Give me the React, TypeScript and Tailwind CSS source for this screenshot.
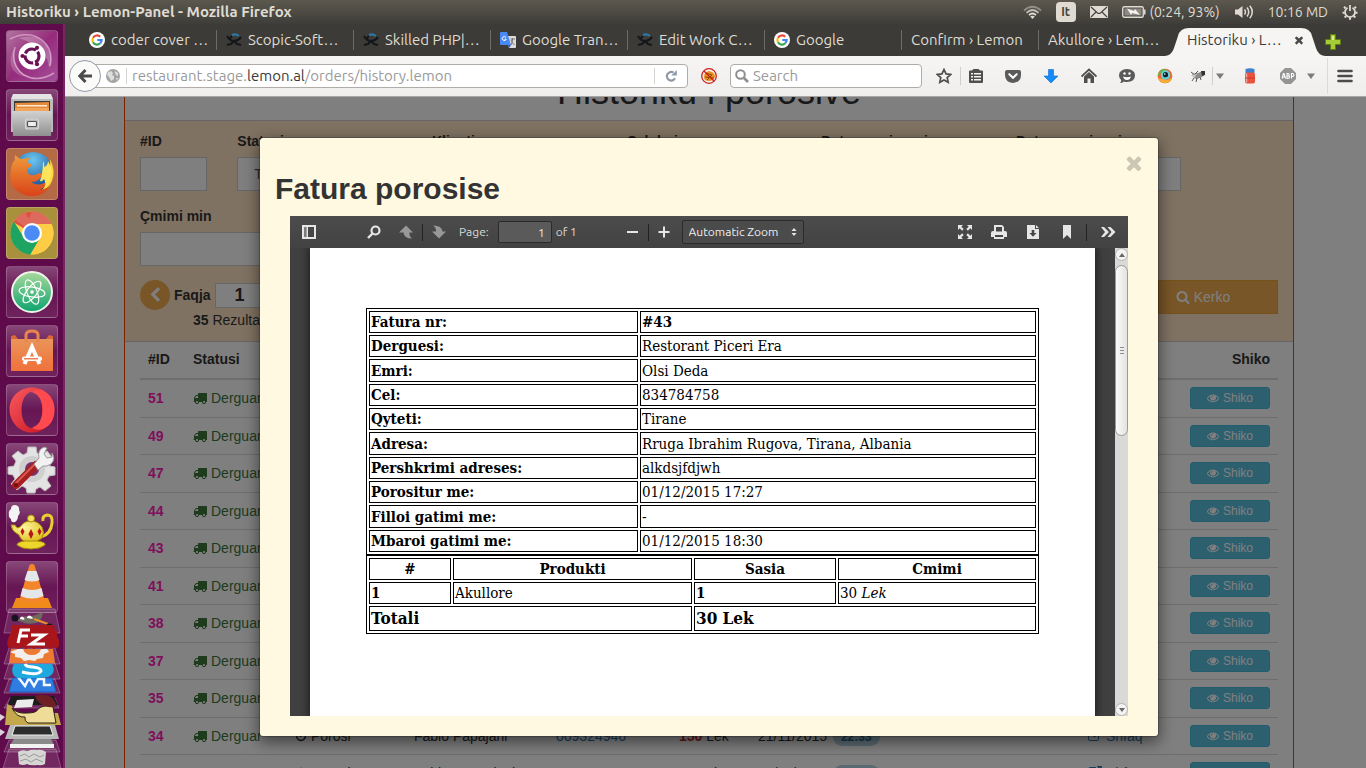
import React from "react";
import type { ReactNode } from "react";

/* ---------- Shared glyphs (1792-unit grid) ---------- */

const GLYPHS = {
  search:
    "M1216 832q0-185-131.5-316.5t-316.5-131.5-316.5 131.5-131.5 316.5 131.5 316.5 316.5 131.5 316.5-131.5 131.5-316.5zm512 832q0 52-38 90t-90 38q-54 0-90-38l-343-342q-179 124-399 124-143 0-273.5-55.5t-225-150-150-225-55.5-273.5 55.5-273.5 150-225 225-150 273.5-55.5 273.5 55.5 225 150 150 225 55.5 273.5q0 220-124 399l343 343q37 37 37 90z",
  eye: "M1664 960q-152-236-381-353 61 104 61 225 0 185-131.5 316.5t-316.5 131.5-316.5-131.5-131.5-316.5q0-121 61-225-229 117-381 353 133 205 333.5 326.5t434.5 121.5 434.5-121.5 333.5-326.5zm-720-384q0-20-14-34t-34-14q-125 0-214.5 89.5t-89.5 214.5q0 20 14 34t34 14 34-14 14-34q0-86 61-147t147-61q20 0 34-14t14-34zm848 384q0 34-20 69-140 230-376.5 368.5t-499.5 138.5-499.5-139-376.5-368q-20-35-20-69t20-69q140-229 376.5-368t499.5-139 499.5 139 376.5 368q20 35 20 69z",
  truck:
    "M640 1408q0-52-38-90t-90-38-90 38-38 90 38 90 90 38 90-38 38-90zm-384-512h384v-256h-158q-13 0-22 9l-195 195q-9 9-9 22v30zm1280 512q0-52-38-90t-90-38-90 38-38 90 38 90 90 38 90-38 38-90zm256-1088v1024q0 15-4 26.5t-13.5 18.5-16.5 11.5-23.5 6-22.5 2-25.5 0-22.5-.5q0 106-75 181t-181 75-181-75-75-181h-384q0 106-75 181t-181 75-181-75-75-181h-64q-3 0-22.5.5t-25.5 0-22.5-2-23.5-6-16.5-11.5-13.5-18.5-4-26.5q0-26 19-45t45-19v-320q0-8-.5-35t0-38 2.5-34.5 6.5-37 14-30.5 22.5-30l198-198q19-19 50.5-32t58.5-13h160v-192q0-26 19-45t45-19h1024q26 0 45 19t19 45z",
  chevronLeft:
    "M1427 301l-531 531 531 531q19 19 19 45t-19 45l-166 166q-19 19-45 19t-45-19l-742-742q-19-19-19-45t19-45l742-742q19-19 45-19t45 19l166 166q19 19 19 45t-19 45z",
  times:
    "M1490 1322q0 40-28 68l-136 136q-28 28-68 28t-68-28l-294-294-294 294q-28 28-68 28t-68-28l-136-136q-28-28-28-68t28-68l294-294-294-294q-28-28-28-68t28-68l136-136q28-28 68-28t68 28l294 294 294-294q28-28 68-28t68 28l136 136q28 28 28 68t-28 68l-294 294 294 294q28 28 28 68z",
  clock:
    "M1024 544v448q0 14-9 23t-23 9h-320q-14 0-23-9t-9-23v-64q0-14 9-23t23-9h224v-352q0-14 9-23t23-9h64q14 0 23 9t9 23zm416 352q0-148-73-273t-198-198-273-73-273 73-198 198-73 273 73 273 198 198 273 73 273-73 198-198 73-273zm224 0q0 209-103 385.5t-279.5 279.5-385.5 103-385.5-103-279.5-279.5-103-385.5 103-385.5 279.5-279.5 385.5-103 385.5 103 279.5 279.5 103 385.5z",
  external:
    "M1408 928v320q0 119-84.500 203.500t-203.500 84.500h-832q-119 0-203.500-84.500t-84.500-203.500v-832q0-119 84.500-203.500t203.500-84.500h704q14 0 23 9t9 23v64q0 14-9 23t-23 9h-704q-66 0-113 47t-47 113v832q0 66 47 113t113 47h832q66 0 113-47t47-113v-320q0-14 9-23t23-9h64q14 0 23 9t9 23zm384-864v512q0 26-19 45t-45 19-45-19l-176-176-652 652q-10 10-23 10t-23-10l-114-114q-10-10-10-23t10-23l652-652-176-176q-19-19-19-45t19-45 45-19h512q26 0 45 19t19 45z",
};

function Glyph({ name, className }: { name: keyof typeof GLYPHS; className?: string }) {
  return (
    <svg viewBox="0 0 1792 1792" className={className} fill="currentColor" aria-hidden="true">
      <path d={GLYPHS[name]} />
    </svg>
  );
}

/* ---------- System bar ---------- */

function SystemBar() {
  return (
    <header className="flex h-6 shrink-0 items-center justify-between bg-gradient-to-b from-[#5c584e] to-[#3e3d39] pr-2 pl-1.5 text-[#dfdbd2]">
      <h1 className="text-[15px] font-bold">Historiku › Lemon-Panel - Mozilla Firefox</h1>
      <div className="flex items-center gap-[14px] text-sm">
        <svg className="h-4 w-[19px]" viewBox="0 0 19 16" fill="none" stroke="#dfdbd2" strokeWidth="1.8" aria-hidden="true">
          <path d="M1 6.500Q9.500-1 18 6.500" opacity=".45" />
          <path d="M3.500 8.800Q9.500 3.200 15.500 8.800" opacity=".8" />
          <path d="M6 11.200Q9.500 7.800 13 11.200" />
          <path d="M9.500 15l-2.300-2.500q2.300-1.700 4.600 0z" fill="#dfdbd2" stroke="none" />
        </svg>
        <span className="flex h-5 w-5 items-center justify-center rounded-sm bg-[#dfdbd2] text-xs font-semibold text-[#45433e]">It</span>
        <svg className="h-3 w-[18px]" viewBox="0 0 18 12" aria-hidden="true">
          <rect width="18" height="12" rx="1" fill="#dfdbd2" />
          <path d="M1 1l6.500 6q1.500 1 3 0L17 1M1 11l5-5M17 11l-5-5" fill="none" stroke="#45433e" strokeWidth="1.200" />
        </svg>
        <span className="flex items-center gap-1">
          <svg className="h-3 w-6" viewBox="0 0 24 12" aria-hidden="true">
            <rect x=".75" y=".75" width="20.500" height="10.500" rx="1.500" fill="none" stroke="#dfdbd2" strokeWidth="1.400" />
            <rect x="2.500" y="2.500" width="17" height="7" fill="#8d8a83" />
            <path d="M22 3.500h1.500v5H22z" fill="#dfdbd2" />
            <path d="M5 2.500l7 2.500 1-2 5 6-8-2-1 2z" fill="#f4f2ed" />
          </svg>
          (0:24, 93%)
        </span>
        <svg className="h-4 w-5" viewBox="0 0 20 16" fill="none" stroke="#dfdbd2" strokeWidth="1.500" aria-hidden="true">
          <path d="M1 5.500h3L8.500 2v12L4 10.500H1z" fill="#dfdbd2" stroke="none" />
          <path d="M10.500 5.500q2 2.500 0 5M13 3.500q3.500 4.500 0 9M15.800 1.800q5 6.200 0 12.400" />
        </svg>
        <span>10:16 MD</span>
        <svg className="h-4 w-4" viewBox="0 0 16 16" fill="none" stroke="#dfdbd2" strokeWidth="1.800" aria-hidden="true">
          <path d="M5.500 3.700a5 5 0 1 0 5 0" />
          <path d="M8 1v6" />
          <path d="M3.500 4.200L2 2.700M12.500 4.200L14 2.700M2.600 8.700H.5M13.400 8.700h2.100M4.200 12L2.700 13.500M11.800 12l1.500 1.500M8 13.500v2.200" strokeWidth="2" />
        </svg>
      </div>
    </header>
  );
}

/* ---------- Launcher ---------- */

function Tile({ label, tone = "bg-gradient-to-b from-white/25 via-white/5 to-white/10", children }: { label: string; tone?: string; children: ReactNode }) {
  return (
    <button
      type="button"
      aria-label={label}
      className={`flex h-[52px] w-[52px] shrink-0 items-center justify-center rounded-[4px] border border-white/20 ${tone}`}
    >
      <svg viewBox="0 0 50 50" className="h-[50px] w-[50px]" aria-hidden="true">
        {children}
      </svg>
    </button>
  );
}

function Launcher() {
  return (
    <nav aria-label="Launcher" className="relative flex w-[65px] shrink-0 flex-col gap-[7px] overflow-hidden border-r-2 border-[#7a2563] bg-[#5f0a4b] pt-1.5 pl-1.5">
      <svg width="0" height="0" className="absolute" aria-hidden="true">
        <defs>
          <linearGradient id="metal" x1="0" y1="0" x2="0" y2="1">
            <stop offset="0" stopColor="#d2d2d2" />
            <stop offset="1" stopColor="#8f8f8f" />
          </linearGradient>
          <radialGradient id="globe" cx=".5" cy=".2" r=".8">
            <stop offset="0" stopColor="#6cc6f0" />
            <stop offset="1" stopColor="#0c3f88" />
          </radialGradient>
          <linearGradient id="fox" x1="0" y1="0" x2="0" y2="1">
            <stop offset="0" stopColor="#f09a3a" />
            <stop offset="1" stopColor="#d9431a" />
          </linearGradient>
          <linearGradient id="atom" x1="0" y1="0" x2="0" y2="1">
            <stop offset="0" stopColor="#a8d99a" />
            <stop offset="1" stopColor="#0da46f" />
          </linearGradient>
          <linearGradient id="bag" x1="0" y1="0" x2="0" y2="1">
            <stop offset="0" stopColor="#e9955a" />
            <stop offset="1" stopColor="#f0713a" />
          </linearGradient>
          <linearGradient id="opera" x1="0" y1="0" x2="1" y2="1">
            <stop offset="0" stopColor="#fb5a5f" />
            <stop offset="1" stopColor="#c4121f" />
          </linearGradient>
          <radialGradient id="gold" cx=".4" cy=".3" r=".8">
            <stop offset="0" stopColor="#fdf6a0" />
            <stop offset="1" stopColor="#dcb80e" />
          </radialGradient>
          <linearGradient id="swirl" x1="0" y1="0" x2="1" y2="1">
            <stop offset="0" stopColor="#b2739f" />
            <stop offset=".5" stopColor="#962b7c" />
            <stop offset="1" stopColor="#a4509a" />
          </linearGradient>
        </defs>
      </svg>

      <Tile label="Dash">
        <rect width="50" height="50" rx="3" fill="url(#swirl)" />
        <path d="M3 8q18-9 32 1 12 10 8 26M47 42q-16 10-30 2Q3 34 8 16" fill="none" stroke="#d9a9cd" strokeWidth="1.500" opacity=".8" />
        <path d="M8 16Q3 36 20 45q-8 1-14-6-6-10 2-23z" fill="#fff" opacity=".2" />
        <path d="M12 7q22-6 30 12 4 10 0 18-1-20-30-30z" fill="#fff" opacity=".25" />
        <circle cx="25" cy="25" r="13.500" fill="#fff" />
        <circle cx="25" cy="25" r="7" fill="none" stroke="#6b1256" strokeWidth="3.200" strokeDasharray="12.700 2" strokeDashoffset="5" />
        <circle cx="15.500" cy="25" r="2.100" fill="#6b1256" />
        <circle cx="30" cy="16.800" r="2.100" fill="#6b1256" />
        <circle cx="30" cy="33.200" r="2.100" fill="#6b1256" />
      </Tile>

      <Tile label="Files">
        <path d="M6 4h38l2 5H4z" fill="#e3e3e3" />
        <path d="M4 9h42v33H4z" fill="#bcbcbc" />
        <path d="M7 11h36v10H7z" fill="#3b3b3b" />
        <path d="M8 13l34-1v8H8z" fill="#e58a38" />
        <path d="M10 15h30v1.500H10z" fill="#fbe9d4" />
        <path d="M8 18h34v3H8z" fill="#f2a65c" />
        <path d="M5 21h40l-1 25H6z" fill="url(#metal)" />
        <rect x="18.500" y="29" width="13" height="10" rx="2" fill="#b9b9b9" stroke="#d8d8d8" strokeWidth="1.200" />
        <rect x="20.500" y="31.500" width="9" height="5" rx="1" fill="#efefef" stroke="#555" strokeWidth="1.200" />
      </Tile>

      <Tile label="Firefox" tone="bg-[#b36a45]">
        <circle cx="26" cy="23" r="20" fill="url(#globe)" />
        <path d="M43 10q6 12 2 22-5 13-18 15 12-6 13-18 4-8 3-19z" fill="#ffd63a" />
        <path d="M4 20q1-7 4-9-1-3 0-5 3 3 6 4 5-1 10-1-4 2-4 5 4 0 5 2-1 2-5 4 0 5 4 6 3 1 8-2 3 0 3 3-4 6-11 6 9 6 17-2-2 7-8 10 7-1 11-6-5 11-16 12-12 1-20-7Q1 34 4 20z" fill="url(#fox)" />
        <path d="M36 12q2 3 1 6 4-1 4-6 6 10 2 18-1 6-5 9 1-6-1-9-2 3-4 2 3-8 3-20z" fill="#fbe35a" />
      </Tile>

      <Tile label="Chrome" tone="bg-[#a8903c]">
        <circle cx="25" cy="25" r="21.500" fill="#fdd04d" />
        <path d="M25 25L6.400 14.200A21.500 21.500 0 0 1 44.500 16H25z" fill="#dd5144" />
        <path d="M25 3.500A21.500 21.500 0 0 1 44.500 16H25l-9 8z" fill="#dd6a5c" />
        <path d="M6.800 13.500A21.500 21.500 0 0 0 23.500 46.500l9-15-15-1z" fill="#1da362" />
        <path d="M23.500 46.500A21.500 21.500 0 0 0 44.500 16H25l8 14z" fill="#ffcd45" />
        <path d="M17 18l-9-6q4-6 10-7.500L25 16z" fill="#dd6a5c" />
        <circle cx="25" cy="25" r="10" fill="#fff" />
        <circle cx="25" cy="25" r="7.800" fill="#4a8bf5" />
      </Tile>

      <Tile label="Atom">
        <circle cx="25" cy="25" r="20" fill="url(#atom)" stroke="#eef3ec" strokeWidth="2" />
        <g fill="none" stroke="#fff" strokeWidth="1.200">
          <ellipse cx="25" cy="25" rx="13" ry="5" transform="rotate(8 25 25)" />
          <ellipse cx="25" cy="25" rx="13" ry="5" transform="rotate(68 25 25)" />
          <ellipse cx="25" cy="25" rx="13" ry="5" transform="rotate(128 25 25)" />
        </g>
        <circle cx="25" cy="25" r="1.800" fill="#fff" />
      </Tile>

      <Tile label="Software Center">
        <path d="M4 10l5 4h32l5-4v35H4z" fill="#b8481e" />
        <path d="M4 13h42v32H4z" fill="url(#bag)" />
        <path d="M4 10l4-1 3 4H4zM46 10l-4-1-3 4h7z" fill="#d96a35" />
        <path d="M19 16V9q0-4 6-4t6 4v7" fill="none" stroke="#ea8350" strokeWidth="3" />
        <path d="M17.500 38L25 21l7.500 17" fill="none" stroke="#fff" strokeWidth="4" />
        <rect x="15" y="30.500" width="20" height="4.500" rx="2" fill="#fff" />
        <path d="M17 32.800h14" stroke="#e8602a" strokeWidth="1.200" />
      </Tile>

      <Tile label="Opera">
        <path d="M25 2.500c12.500 0 22.500 9.500 22.500 22S37.500 47.500 25 47.500 2.500 37 2.500 24.500 12.500 2.500 25 2.500zM25 7c-6 0-10.500 8-10.500 18S19 43 25 43s10.500-8 10.500-18S31 7 25 7z" fill="url(#opera)" fillRule="evenodd" />
        <path d="M25 7q4-3.500 10-2 12.500 6 12.500 20T36 44q-6 2-11-1 10.500-4 10.500-18T25 7z" fill="#ff4a4f" />
      </Tile>

      <Tile label="System Settings">
        <path d="M21 3h8l1 6 4 2 6-4 5 6-4 5 2 4 5 1v8l-6 1-2 4 4 6-6 5-5-4-4 2-1 4h-8l-1-5-4-2-5 4-6-6 4-5-2-4-5-1v-7l6-1 2-5-4-5 6-5 5 4 4-2z" fill="#e3e3e3" stroke="#bdbdbd" />
        <circle cx="25" cy="25" r="13" fill="#cfcfcf" />
        <circle cx="25" cy="25" r="7" fill="#7b3068" />
        <path d="M9 41l20-20" stroke="#a81f1f" strokeWidth="8" strokeLinecap="round" />
        <path d="M9 39l19-19" stroke="#d85a52" strokeWidth="2" strokeLinecap="round" />
        <circle cx="9" cy="41" r="2" fill="#6e0f0f" />
        <path d="M27 20l5-6q-2-8 5-11l3 1-3 6 3 4 5-1 0-4q4 6-1 11-4 3-8 2l-5 4z" fill="#f2f2f2" stroke="#9a9a9a" />
      </Tile>

      <Tile label="Wine">
        <path d="M4 6q0-4 4-4 5 1 4 5 2 3-1 6 0 4-3 6-4 1-4-3-3-2-2-5-1-3 2-5z" fill="#f4f4f4" />
        <path d="M36 18q-1-5 4-6 6 0 5 8-1 11-11 14" fill="none" stroke="#e9cf30" strokeWidth="3" />
        <path d="M4 22h4q2 5 6 1 3-5 10-5t11 6q3 6 0 11-5 5-12 4-8 0-10-5-1-3-4-4-4-2-5-8z" fill="url(#gold)" stroke="#a88b10" />
        <path d="M18 38h12q9 1 8 4-5 4-14 4t-14-4q0-3 8-4z" fill="#eed52c" stroke="#a88b10" />
        <circle cx="24" cy="15.500" r="3.500" fill="#f4e25e" stroke="#a88b10" />
        <path d="M24 26l2.500 5-2.500 5-2.500-5zM15.500 25l2 3.500-2 4-2-4zM32.500 25l2 3.500-2 4-2-4z" fill="#b81717" />
      </Tile>

      <Tile label="VLC">
        <path d="M9 36h32l4 10H5z" fill="#f08a1a" />
        <path d="M22.500 3q2.500-2 5 0l10 35q-12 6-25 0z" fill="#f3862a" />
        <path d="M20.500 9h9l3 9q-7.500 3-15 0zM15.500 26q9.500 4 19 0l2 8q-11.500 5-23 0z" fill="#e4e7ea" />
      </Tile>

      <FoldedTiles />
    </nav>
  );
}

function FoldedTiles() {
  return (
    <svg viewBox="0 608 65 160" className="absolute bottom-0 left-0 h-[160px] w-[65px]" aria-label="More applications" role="img">
      <g fill="#fff" fillOpacity=".12" stroke="#fff" strokeOpacity=".25">
        <path d="M9 609h46l5 24H4z" />
        <path d="M9 648h46l5 16H4z" />
        <path d="M9 663h46l5 16H4z" />
        <path d="M9 679h46l5 14H4z" />
        <path d="M10 698h45l4 10H4z" />
        <path d="M9 740h47l4 12H4z" />
        <path d="M9 749h47l5 19H3z" />
      </g>
      <path d="M19 619q5-4 9-2 9-2 15-5-1 9-7 11-9 2-14-1-5-1-7-3z" fill="#6f695e" />
      <circle cx="15" cy="618" r="3.500" fill="#15141c" />
      <path d="M20 618q2-3 4 0t-4 1zM27 617q2-3 5 0t-5 1z" fill="#fff" />
      <path d="M34 619l14 5" stroke="#e8912c" strokeWidth="2" />
      <path d="M46 624q7-2 9 5-6-1-9-5z" fill="#1a1a1a" />
      <path d="M12 625h42l1 4 2 3 0 4 2 4 0 6-3 3-3-2-3 2-4-2-4 2-4-2-4 2-4-2-4 2-4-2-4 2-4-2-4 2-2-2-1-4 2-7 2-4z" fill="#a8161b" />
      <path d="M30 630H21l-3 13M19 636h9M31 635h13L31 644h14" fill="none" stroke="#fff" strokeWidth="3" />
      <path d="M11 649h42l2 14H9z" fill="#ec7a33" />
      <path d="M18 649h5q2 6 9 6t9-6h6l2 3-5 2-1 4-6 1-2 2-6-1-5 1-3-3-6-1v-3l-5-2z" fill="#f4eeea" />
      <path d="M13 678h39l4 14H9z" fill="#2f7de0" stroke="#1460c4" />
      <path d="M18 677l7 9 4-8 5 8 4-7h6v6h7" fill="none" stroke="#f4f8ff" strokeWidth="2.500" />
      <path d="M14 664h38q3 5 1 9-3 5-9 4-7 2-12 1-5 1-10 0-7 1-9-4-2-5 1-10z" fill="#1fa7df" />
      <path d="M25 664q1 3 8 3 8 1 8 4-3 5-19 1" fill="none" stroke="#fff" strokeWidth="3" />
      <path d="M11 696h43l4 9H8z" fill="#1d1c1d" />
      <path d="M17 700l17-1-2 8-18 1z" fill="#ececec" />
      <path d="M7 704l5 2q1 8 16 7h30l3 12H5z" fill="#c5a74c" />
      <path d="M12 708q5 6 15 5 10 0 11-4 6-5 15-2l3 16H28q-4-2-3-6-8 1-13-9z" fill="#efdc98" stroke="#2a2414" />
      <path d="M35 696q10-3 16 1 5 4 5 9-9 3-15-2-5-4-6-8z" fill="#6d1f24" />
      <path d="M10 725h45l4 14H5z" fill="#b8b8b8" />
      <path d="M15 726h35l3 9H12z" fill="#2c2c2c" stroke="#eee" />
      <path d="M14 739h37l3 6H10z" fill="#8a8a8a" />
      <path d="M10 744h44v4H10z" fill="#f2f2f2" />
      <path d="M18 752q4-3 9-1 6-2 10-1 5-1 9 2l-1 12q-4 2-7 1-8 1-11-1-4 2-8 0z" fill="#d6d6d4" />
      <path d="M20 756l5-2 4 3 5-3 6 3 4-2M20 761l6-2 5 3 5-3 7 3" fill="none" stroke="#9a9a98" />
      <path d="M0 714l5 3-5 4zM0 729l5 3-5 4z" fill="#dcd3da" />
    </svg>
  );
}

/* ---------- Browser chrome ---------- */

function GoogleIcon() {
  return (
    <svg viewBox="0 0 16 16" className="h-4 w-4 shrink-0" fill="none" strokeWidth="2.200" aria-hidden="true">
      <circle cx="8" cy="8" r="8" fill="#fff" />
      <path d="M11.200 4.700A4.600 4.600 0 0 0 4 5.800" stroke="#ea4335" />
      <path d="M4 5.800a4.600 4.600 0 0 0 0 4.500" stroke="#fbbc05" />
      <path d="M4 10.300a4.600 4.600 0 0 0 7.200 1" stroke="#34a853" />
      <path d="M11.200 11.300A4.600 4.600 0 0 0 12.600 8H8.300" stroke="#4285f4" />
    </svg>
  );
}

function ScopicIcon() {
  return (
    <svg viewBox="0 0 16 16" className="h-4 w-4 shrink-0" fill="none" aria-hidden="true">
      <path d="M6 3.500Q9 1 13 4" stroke="#2f77a8" strokeWidth="2" />
      <path d="M1 4q3 5 7 5t7-4M1 13l4-1 3-3 3 3 4 1M4 6l2-2" stroke="#15181a" strokeWidth="2.200" />
    </svg>
  );
}

function TranslateIcon() {
  return (
    <svg viewBox="0 0 16 16" className="h-4 w-4 shrink-0" aria-hidden="true">
      <path d="M6 4h9q1 0 1 1v10q0 1-1 1H9z" fill="#dcdcdc" />
      <path d="M1 0h6l4 13H1q-1 0-1-1V1q0-1 1-1z" fill="#4889f4" />
      <path d="M8 13h3l-2 3z" fill="#2a5cc4" />
      <path d="M6 5.500a2 2 0 1 0 .2 1.700H4.500" fill="none" stroke="#fff" />
      <path d="M10.500 7h4.500M12.500 6v1q0 4-1.500 6M11 8q1 3 3.500 5" fill="none" stroke="#777" />
    </svg>
  );
}

const TABS: { label: string; icon?: ReactNode }[] = [
  { label: "coder cover …", icon: <GoogleIcon /> },
  { label: "Scopic-Soft…", icon: <ScopicIcon /> },
  { label: "Skilled PHP|…", icon: <ScopicIcon /> },
  { label: "Google Tran…", icon: <TranslateIcon /> },
  { label: "Edit Work C…", icon: <ScopicIcon /> },
  { label: "Google", icon: <GoogleIcon /> },
  { label: "Confirm › Lemon" },
  { label: "Akullore › Lem…" },
];

function TabStrip() {
  return (
    <div className="flex h-8 shrink-0 items-stretch bg-[#3c3b37] pl-[15px] text-[15px] text-[#dfdbd2]" role="tablist">
      {TABS.map((tab, i) => (
        <button
          key={tab.label}
          type="button"
          role="tab"
          className="flex min-w-0 flex-1 items-center py-1.5"
        >
          <span
            className={`flex h-full min-w-0 flex-1 items-center gap-1.5 whitespace-nowrap pl-[9px] ${
              i === TABS.length - 1 ? "" : "border-r border-[#6d6b66]"
            }`}
          >
            {tab.icon}
            {tab.label}
          </span>
        </button>
      ))}
      <div className="relative flex min-w-0 flex-1 items-center" role="tab" aria-selected="true">
        <svg viewBox="0 0 160 28" preserveAspectRatio="none" className="absolute -left-[11px] bottom-0 h-7 w-[160px]" aria-hidden="true">
          <path d="M0 28Q7 27 9 20L13 8Q15 0 24 0H136Q145 0 147 8L151 20Q153 27 160 28z" fill="#f6f5f4" />
        </svg>
        <span className="relative flex flex-1 items-center justify-between pr-2 pl-[11px] whitespace-nowrap text-[#3c3b37]">
          Historiku › L…
          <button type="button" aria-label="Close tab" className="text-[#4b4a47]">
            <Glyph name="times" className="h-3 w-3" />
          </button>
        </span>
      </div>
      <button type="button" aria-label="New tab" className="flex w-[53px] items-center pt-1 pl-3">
        <svg viewBox="0 0 16 16" className="h-4 w-4" aria-hidden="true">
          <path d="M5.500.5h5v5h5v5h-5v5h-5v-5h-5v-5h5z" fill="#a5cc35" stroke="#5d7d12" />
          <path d="M7 2h2v4H7z" fill="#d5ea8c" />
        </svg>
      </button>
    </div>
  );
}

function ToolButton({ label, className, children }: { label: string; className?: string; children: ReactNode }) {
  return (
    <button type="button" aria-label={label} className={`flex shrink-0 items-center justify-center ${className ?? "w-[38px]"}`}>
      <svg viewBox="0 0 16 16" className="h-4 w-4" aria-hidden="true">
        {children}
      </svg>
    </button>
  );
}

function Caret() {
  return (
    <svg viewBox="0 0 8 6" className="h-1.5 w-2 shrink-0" aria-hidden="true">
      <path d="M0 .5h8L4 6z" fill="#7b7b7b" />
    </svg>
  );
}

function NavBar() {
  return (
    <div className="flex h-[41px] shrink-0 items-center border-b border-[#a8a7a5] bg-gradient-to-b from-[#f6f5f4] to-[#efeeec] pr-1 pl-1 text-[15px]">
      <button type="button" aria-label="Back" className="z-10 flex h-8 w-8 shrink-0 items-center justify-center rounded-full border border-[#8f9bab] bg-[#fbfbfa]">
        <svg viewBox="0 0 16 16" className="h-4 w-4" fill="none" stroke="#4b4b4b" strokeWidth="3" aria-hidden="true">
          <path d="M8.500 2L2.800 8l5.700 6M3 8h12" />
        </svg>
      </button>
      <div className="-ml-3 flex h-6 min-w-0 flex-1 items-center rounded-r-sm border border-[#b0aca8] bg-white pl-4">
        <svg viewBox="0 0 14 14" className="h-3.5 w-3.5 shrink-0" aria-hidden="true">
          <circle cx="7" cy="7" r="7" fill="#a3a3a3" />
          <path d="M2 3l3-1 2 2-1 2 2 1v3L5 12 3 8 1 6zM9 2l3 2v3l-2-1-1-2zM10 9l2 0-1 3z" fill="#dedede" />
        </svg>
        <span className="ml-1.5 h-4 w-px shrink-0 bg-[#d5d3d0]" />
        <div role="textbox" aria-label="Address" className="min-w-0 flex-1 overflow-hidden pl-[5px] whitespace-nowrap text-[#9a9a9a]">
          restaurant.stage.<span className="text-[#3a3a3a]">lemon.al</span>/orders/history.lemon
        </div>
        <button type="button" aria-label="Reload" className="flex h-4 w-[33px] items-center justify-center border-l border-[#d5d3d0]">
          <svg viewBox="0 0 12 12" className="h-3 w-3" fill="none" stroke="#8e9aa8" strokeWidth="2.200" aria-hidden="true">
            <path d="M8.500 2.600A4.300 4.300 0 1 0 10 8.300" />
            <path d="M11.800 0v5.500H6.300z" fill="#8e9aa8" stroke="none" />
          </svg>
        </button>
      </div>
      <ToolButton label="Firebug" className="w-[42px]">
        <path d="M3 9q0-5 5-6 6 1 6 6-2 4-6 4-5 0-5-4z" fill="#e8911c" />
        <path d="M5 5l6 2M4 9l9 1M6 12l5-5" stroke="#8a4c08" />
        <circle cx="8" cy="8" r="7.300" fill="none" stroke="#cf2020" strokeWidth="1.300" />
        <path d="M3 3l10 10" stroke="#cf2020" strokeWidth="1.400" />
      </ToolButton>
      <div className="flex h-6 w-[192px] shrink-0 items-center rounded-sm border border-[#b0aca8] bg-white px-1">
        <svg viewBox="0 0 14 14" className="h-3.5 w-3.5 shrink-0" fill="none" stroke="#8e8e8e" aria-hidden="true">
          <circle cx="5.500" cy="5.500" r="4.300" strokeWidth="2" />
          <path d="M9 9l4 4" strokeWidth="2.600" />
        </svg>
        <input aria-label="Search" placeholder="Search" className="min-w-0 flex-1 bg-transparent pl-1 placeholder:text-[#9a9a9a] focus:outline-none" />
      </div>
      <ToolButton label="Bookmark" className="ml-1.5 w-8">
        <path d="M8 1.500l2 4.400 4.800.5-3.600 3.200 1 4.700L8 11.900l-4.200 2.400 1-4.700L1.200 6.400 6 5.900z" fill="none" stroke="#4f4f4f" strokeWidth="1.700" />
      </ToolButton>
      <span className="h-[18px] w-px bg-[#d0cecb]" />
      <ToolButton label="Bookmarks list" className="w-[29px]">
        <path d="M4 2.500L5.500 1h5L12 2.500h2q1 0 1 1v10.500q0 1-1 1H2q-1 0-1-1v-10.500q0-1 1-1z" fill="#4f4f4f" />
        <path d="M3 5h2v1.500H3zM6 5h7v1.500H6zM3 8h2v1.500H3zM6 8h7v1.500H6zM3 11h2v1.500H3zM6 11h7v1.500H6z" fill="#f5f4f3" />
      </ToolButton>
      <span className="w-1" />
      <ToolButton label="Pocket">
        <path d="M2 2h12q2 0 2 2v3q0 7-8 8-8-1-8-8V4q0-2 2-2z" fill="#5a5a5a" />
        <path d="M4.300 6.300L8 9.800l3.700-3.500" fill="none" stroke="#fff" strokeWidth="2" strokeLinecap="round" />
      </ToolButton>
      <ToolButton label="Downloads">
        <path d="M5.500 1.500h5V8H15L8 15 1 8h4.500z" fill="#158cf5" stroke="#0a6fd0" strokeWidth=".6" />
      </ToolButton>
      <ToolButton label="Home">
        <path d="M.5 8.500L8 1.500l7.500 7" fill="none" stroke="#4f4f4f" strokeWidth="1.800" />
        <path d="M3 8.500l5-4.500 5 4.500V15h-3.500v-4.500h-3V15H3z" fill="#4f4f4f" />
      </ToolButton>
      <ToolButton label="Hello">
        <path d="M8 1q8 .5 8 6.500T8 14q-2 0-3-.5Q3.500 15 1 15q1.500-1.500 1.200-3Q0 10 0 7.500 0 1.500 8 1z" fill="#5a5a5a" />
        <circle cx="5.500" cy="5.500" r="1.200" fill="#fff" />
        <circle cx="10.500" cy="5.500" r="1.200" fill="#fff" />
        <path d="M4 8.500q4 1.500 8 0-1 3.500-4 3.500T4 8.500z" fill="#fff" />
      </ToolButton>
      <ToolButton label="Colour picker">
        <circle cx="8" cy="8" r="7.300" fill="#ee6a34" />
        <path d="M8 .7a7.300 7.300 0 0 0-7.300 8Q3 4 8 4z" fill="#6fae45" />
        <path d="M1 10q2 5.500 8 5.300 5-1 6-5.300l-5 2z" fill="#f3ab35" />
        <circle cx="8.500" cy="7" r="4.700" fill="#5fd0d8" />
        <circle cx="8.500" cy="6.700" r="2.600" fill="#11222c" />
        <circle cx="7.800" cy="6" r=".8" fill="#fff" />
      </ToolButton>
      <ToolButton label="FlashBug" className="w-7">
        <path d="M2 6l6-1 5-2 2 3-3 3-5 2-3-1z" fill="#8a8a8a" />
        <path d="M11 3l4 0 0 4-3 1z" fill="#333" />
        <path d="M5 6l3-3M4 10l-2 3M7 10l-1 4M10 9l1 3M1 4l4 3" stroke="#555" />
        <path d="M1 7l6-1-3 4z" fill="#c8c8c8" />
      </ToolButton>
      <span className="mr-[3px] h-[18px] w-px bg-[#d0cecb]" />
      <Caret />
      <ToolButton label="Cleaner" className="ml-1.5 w-[39px]">
        <path d="M3.500 1q4.500-1.500 9 0v4h-9z" fill="#3d7fd0" />
        <rect x="3" y="4.500" width="10" height="11" rx="2" fill="#e8523f" />
        <path d="M4.500 5.500v9" stroke="#f7a79a" strokeWidth="1.500" />
        <path d="M3 10h10" stroke="#c93a28" />
      </ToolButton>
      <ToolButton label="Adblock Plus">
        <path d="M5 0h6l5 5v6l-5 5H5l-5-5V5z" fill="#949494" />
        <g fill="none" stroke="#fff" strokeWidth="1.100">
          <path d="M2 10.500l1.500-5h.5l1.500 5M2.500 9h2.500M7 5.500v5h1.200q1.300-.2 1.300-1.400T8.200 8H7h1q1.200-.2 1.200-1.300T8 5.500zM11.500 10.500v-5h1q1.400.2 1.400 1.500t-1.400 1.500h-1" />
        </g>
      </ToolButton>
      <Caret />
      <span className="ml-3 h-9 w-px bg-[#dcdad7]" />
      <button type="button" aria-label="Open menu" className="flex w-[34px] items-center justify-center">
        <svg viewBox="0 0 16 14" className="h-3.5 w-4" fill="none" stroke="#4b4b4b" strokeWidth="2.600" strokeLinecap="round" aria-hidden="true">
          <path d="M1.500 2h13M1.500 7h13M1.500 12h13" />
        </svg>
      </button>
    </div>
  );
}

/* ---------- Orders page ---------- */

const FIELD = "h-[34px] w-full border border-[#cccccc] bg-white px-4";

function Field({ id, label, className }: { id: string; label: string; className?: string }) {
  return (
    <div className={`px-[15px] ${className ?? ""}`}>
      <label htmlFor={id} className="mb-1.5 block text-sm font-bold whitespace-nowrap">{label}</label>
      <input id={id} className={FIELD} />
    </div>
  );
}

type Order = { id: number; client: string; phone: string; price: string; date: string; time: string };

const ORDERS: Order[] = [51, 49, 47, 44, 43, 41, 38, 37, 35, 34, 31].map((id) =>
  id === 31
    ? { id, client: "Fabio2 Papajani", phone: "0693249486", price: "30", date: "18/11/2015", time: "21:30" }
    : { id, client: "Fabio Papajani", phone: "069324946", price: "150", date: "21/11/2015", time: "22:33" },
);

function OrdersPage() {
  return (
    <div className="mr-[13px] flex justify-center">
      <div className="w-full max-w-[1170px] border-x border-[#ff4500] font-['Liberation_Sans',sans-serif] text-sm text-[#333333]">
        <div className="flex h-6 items-end justify-center overflow-hidden border-b border-[#cccccc] pb-2">
          <h2 className="text-4xl leading-10">Historiku i porosive</h2>
        </div>
        <form className="border-b border-[#cccccc] bg-[#ffe4c4] pt-2.5 pb-[11px]" onSubmit={(e) => e.preventDefault()}>
          <div className="grid grid-cols-12">
            <Field id="f-id" label="#ID" />
            <div className="col-span-2 px-[15px]">
              <label htmlFor="f-status" className="mb-1.5 block text-sm font-bold">Statusi</label>
              <select id="f-status" className={`${FIELD} appearance-none text-[#555555]`}>
                <option>Te gjithe</option>
              </select>
            </div>
            <Field id="f-client" label="Klienti" className="col-span-2" />
            <Field id="f-phone" label="Celulari" className="col-span-2" />
            <Field id="f-from" label="Data e prej se ciu" className="col-span-2" />
            <Field id="f-to" label="Data e prerjes ri" className="col-span-2" />
          </div>
          <div className="mt-[15px] grid grid-cols-12">
            <Field id="f-min" label="Çmimi min" className="col-span-2" />
          </div>
          <div className="mt-3.5 grid grid-cols-12">
            <div className="col-span-10 pl-[15px]">
              <div className="flex items-center gap-1">
                <button type="button" aria-label="Previous page" className="flex h-[30px] w-[30px] items-center justify-center rounded-full bg-[#f0ad4e] text-white">
                  <Glyph name="chevronLeft" className="h-4 w-4" />
                </button>
                <label htmlFor="f-page" className="font-bold">Faqja</label>
                <input id="f-page" defaultValue="1" className="h-[25px] w-[50px] border border-[#cccccc] bg-white text-center text-lg font-bold" />
              </div>
              <p className="pl-[53px] leading-5"><b>35</b> Rezultate</p>
            </div>
            <div className="col-span-2 flex justify-end pr-[15px]">
              <button type="submit" className="flex h-[34px] w-[150px] items-center justify-center gap-1 border border-[#eea236] bg-[#f0ad4e] text-white">
                <Glyph name="search" className="h-3.5 w-3.5" />
                Kerko
              </button>
            </div>
          </div>
        </form>
        <div className="px-[15px]">
          <table className="w-full table-fixed text-left">
            <colgroup>
              <col className="w-[45px]" />
              <col className="w-[102px]" />
              <col className="w-[119px]" />
              <col className="w-[142px]" />
              <col className="w-[123px]" />
              <col className="w-[79px]" />
              <col />
              <col className="w-[102px]" />
              <col className="w-[96px]" />
            </colgroup>
            <thead>
              <tr className="h-[37px] border-b-2 border-[#dddddd]">
                <th className="px-2 pb-0.5">#ID</th>
                <th className="px-2 pb-0.5">Statusi</th>
                <th className="px-2 pb-0.5">Tipi</th>
                <th className="px-2 pb-0.5">Klienti</th>
                <th className="px-2 pb-0.5">Cel</th>
                <th className="px-2 pb-0.5">Cmimi</th>
                <th className="px-2 pb-0.5">Data</th>
                <th className="px-2 pb-0.5">Harta</th>
                <th className="px-2 pb-0.5 text-right">Shiko</th>
              </tr>
            </thead>
            <tbody>
              {ORDERS.map((o) => (
                <tr key={o.id} className="border-b border-[#dddddd] whitespace-nowrap odd:h-[38px] even:h-[37px]">
                  <td className="px-2 font-bold text-[#ff1dba]">{o.id}</td>
                  <td className="px-2 text-[#3c763d]">
                    <span className="flex items-center gap-1"><Glyph name="truck" className="h-3.5 w-3.5" />Derguar</span>
                  </td>
                  <td className="px-2">
                    <span className="flex items-center gap-1"><Glyph name="clock" className="h-3.5 w-3" />Porosi</span>
                  </td>
                  <td className="px-2">{o.client}</td>
                  <td className="px-2"><a href="#phone" className="text-[#337ab7]">{o.phone}</a></td>
                  <td className="px-2"><b className="text-[#c9302c]">{o.price}</b> Lek</td>
                  <td className="px-2">
                    {o.date} <span className="ml-0.5 rounded-full bg-[#b4d5e4] px-2 py-0.5 text-xs font-bold text-[#31708f]">{o.time}</span>
                  </td>
                  <td className="px-2">
                    <a href="#map" className="flex items-center gap-1 text-[#337ab7]"><Glyph name="external" className="h-3.5 w-3.5" />Shfaq</a>
                  </td>
                  <td className="px-2">
                    <button type="button" className="flex h-[22px] w-full items-center justify-center gap-1 rounded-[3px] border border-[#46b8da] bg-[#5bc0de] text-xs text-white">
                      <Glyph name="eye" className="h-3 w-3" />
                      Shiko
                    </button>
                  </td>
                </tr>
              ))}
            </tbody>
          </table>
        </div>
      </div>
    </div>
  );
}

/* ---------- PDF viewer ---------- */

function PdfButton({ label, className = "w-8", children }: { label: string; className?: string; children: ReactNode }) {
  return (
    <button type="button" aria-label={label} className={`flex h-6 items-center justify-center text-[#e6e6e6] ${className}`}>
      <svg viewBox="0 0 16 16" className="h-4 w-4" fill="currentColor" aria-hidden="true">
        {children}
      </svg>
    </button>
  );
}

function PdfDivider() {
  return <span className="h-[17px] w-px bg-[#222222]" />;
}

function PdfToolbar() {
  return (
    <div className="grid h-8 grid-cols-[1fr_auto_1fr] items-center bg-gradient-to-b from-[#4c4c4c] to-[#424242] text-xs text-[#d9d9d9]">
      <div className="flex items-center pl-[3px]">
        <PdfButton label="Toggle sidebar">
          <path d="M1 1h14v14H1zM3 3v10h2.500V3zM7 3v10h6V3z" fillRule="evenodd" />
          <path d="M3 3h2.500v10H3z" opacity=".35" />
        </PdfButton>
        <span className="w-[33px]" />
        <PdfButton label="Find">
          <circle cx="9.500" cy="6.500" r="4" fill="none" stroke="currentColor" strokeWidth="2.200" />
          <path d="M6.500 9.500L2 14" stroke="currentColor" strokeWidth="2.400" />
        </PdfButton>
        <PdfButton label="Previous page">
          <path d="M8 1.500l7 7h-3.500q-.5 3.500 2.500 6-8 0-8.500-6H1z" fill="#989898" />
        </PdfButton>
        <PdfDivider />
        <PdfButton label="Next page">
          <path d="M8 14.500l7-7h-3.500Q11 1.500 2 1.500q3.500 2.500 3 6H1z" fill="#989898" />
        </PdfButton>
        <label htmlFor="pdf-page" className="mx-1">Page:</label>
        <input id="pdf-page" defaultValue="1" className="ml-[5px] h-[22px] w-[54px] rounded-xs border border-[#2b2b2b] bg-[#5a5a5a] px-1.5 text-right text-[#e6e6e6]" />
        <span className="ml-1 whitespace-nowrap">of 1</span>
      </div>
      <div className="flex items-center pl-0.5">
        <PdfButton label="Zoom out" className="w-[31px]"><path d="M3 7h11v2H3z" /></PdfButton>
        <PdfDivider />
        <PdfButton label="Zoom in" className="w-[31px]"><path d="M7 2.500h2V7h4.500v2H9v4.500H7V9H2.500V7H7z" /></PdfButton>
        <div className="relative ml-0.5">
          <select aria-label="Zoom" className="h-6 w-[122px] appearance-none rounded-xs border border-[#2b2b2b] bg-[#4b4b4b] pl-1.5 text-[#f0f0f0]">
            <option>Automatic Zoom</option>
          </select>
          <svg viewBox="0 0 6 8" className="pointer-events-none absolute top-2 right-[7px] h-2 w-1.5" fill="#e6e6e6" aria-hidden="true">
            <path d="M3 0l2.500 3h-5zM3 8L.5 5h5z" />
          </svg>
        </div>
      </div>
      <div className="flex items-center justify-end pr-[3px]">
        <PdfButton label="Presentation mode" className="w-[34px]">
          <path d="M1 1h5L4.300 2.700l2.400 2.400-1.600 1.600-2.400-2.400L1 6zM15 1v5l-1.700-1.700-2.400 2.400-1.600-1.600 2.400-2.400L10 1zM1 15v-5l1.700 1.700 2.400-2.400 1.600 1.600-2.400 2.400L6 15zM15 15h-5l1.700-1.700-2.400-2.400 1.600-1.600 2.400 2.400L15 10z" />
        </PdfButton>
        <PdfButton label="Print" className="w-[34px]">
          <path d="M3 1h8l2 2v4h1q2 0 2 2v4h-3v2H3v-2H0V9q0-2 2-2h1zM5 3v4.500h6V3zM4 11v2h8v-2z" fillRule="evenodd" />
        </PdfButton>
        <PdfButton label="Download" className="w-[34px]">
          <path d="M2 1h8v4h4v10H2zM6.700 6v3H4.500L8 12.800 11.500 9H9.300V6zM11 1l3 3h-3z" fillRule="evenodd" />
        </PdfButton>
        <PdfButton label="Bookmark" className="w-[34px]"><path d="M4 1h8v14l-4-4-4 4z" /></PdfButton>
        <span className="w-0.5" />
        <PdfDivider />
        <span className="w-1" />
        <PdfButton label="Tools" className="w-[34px]">
          <path d="M1 3h3l5 5-5 5H1l4-5zM7.500 3h3l5 5-5 5h-3l4-5z" />
        </PdfButton>
      </div>
    </div>
  );
}

const DETAILS: [string, string][] = [
  ["Fatura nr:", "#43"],
  ["Derguesi:", "Restorant Piceri Era"],
  ["Emri:", "Olsi Deda"],
  ["Cel:", "834784758"],
  ["Qyteti:", "Tirane"],
  ["Adresa:", "Rruga Ibrahim Rugova, Tirana, Albania"],
  ["Pershkrimi adreses:", "alkdsjfdjwh"],
  ["Porositur me:", "01/12/2015 17:27"],
  ["Filloi gatimi me:", "-"],
  ["Mbaroi gatimi me:", "01/12/2015 18:30"],
];

const CELL = "h-[22px] border border-black px-px py-0 leading-5";

function Invoice() {
  return (
    <div className="mx-14 mt-[60px] font-['DejaVu_Serif_Condensed','DejaVu_Serif',serif] text-[15px] text-black">
      <table className="w-full table-fixed border-separate border-spacing-[2px] border border-black text-left">
        <colgroup>
          <col className="w-[269px]" />
          <col />
        </colgroup>
        <tbody>
          {DETAILS.map(([name, value], i) => (
            <tr key={name} className="nth-[3n]:h-[23px]">
              <th className={CELL}>{name}</th>
              <td className={i === 0 ? `${CELL} font-bold` : CELL}>{value}</td>
            </tr>
          ))}
        </tbody>
      </table>
      <table className="w-full table-fixed border-separate border-spacing-[2px] border border-black text-left">
        <colgroup>
          <col className="w-[82px]" />
          <col className="w-[239px]" />
          <col className="w-[142px]" />
          <col />
        </colgroup>
        <thead>
          <tr>
            {["#", "Produkti", "Sasia", "Cmimi"].map((h) => (
              <th key={h} className={`${CELL} text-center`}>{h}</th>
            ))}
          </tr>
        </thead>
        <tbody>
          <tr>
            <td className={`${CELL} font-bold`}>1</td>
            <td className={CELL}>Akullore</td>
            <td className={`${CELL} font-bold`}>1</td>
            <td className={CELL}>30 <i>Lek</i></td>
          </tr>
          <tr className="text-[17px]">
            <th colSpan={2} className="h-[25px] border border-black px-px py-0 leading-[23px]">Totali</th>
            <th colSpan={2} className="h-[25px] border border-black px-px py-0 leading-[23px]">30 Lek</th>
          </tr>
        </tbody>
      </table>
    </div>
  );
}

function ScrollArrow({ down }: { down?: boolean }) {
  return (
    <button type="button" aria-label={down ? "Scroll down" : "Scroll up"} className="flex h-[13px] w-full items-center justify-center rounded-full border border-[#b5b2af] bg-[#f4f3f2]">
      <svg viewBox="0 0 6 4" className="h-1 w-1.5" fill="#666" aria-hidden="true">
        <path d={down ? "M0 0h6L3 4z" : "M0 4h6L3 0z"} />
      </svg>
    </button>
  );
}

function PdfViewer() {
  return (
    <div className="mx-[15px] flex h-[500px] flex-col bg-[#404040]">
      <PdfToolbar />
      <div className="flex min-h-0 flex-1">
        <div className="flex flex-1 overflow-hidden bg-[#404040] px-5">
          <div className="min-w-0 flex-1 bg-white shadow-[0_0_8px_2px_rgba(0,0,0,0.5)]">
            <Invoice />
          </div>
        </div>
        <div className="flex w-[13px] flex-col bg-[#dbd9d7]">
          <ScrollArrow />
          <div className="mt-1 flex h-[171px] flex-col items-center justify-center gap-0.5 rounded-full border border-[#9c9996] bg-gradient-to-r from-[#fbfbfb] to-[#e4e2e0]">
            <span className="h-px w-1 bg-[#8c8c8c]" />
            <span className="h-px w-1 bg-[#8c8c8c]" />
            <span className="h-px w-1 bg-[#8c8c8c]" />
          </div>
          <span className="flex-1" />
          <ScrollArrow down />
        </div>
      </div>
    </div>
  );
}

function InvoiceModal() {
  return (
    <div className="absolute inset-0 flex items-start justify-center overflow-hidden bg-black/50 pt-10 pr-[13px]">
      <div
        role="dialog"
        aria-labelledby="invoice-title"
        className="w-full max-w-[900px] rounded-[4px] border border-black/20 bg-[#fff9e1] bg-clip-padding px-[15px] pt-[15px] pb-5 shadow-[0_5px_15px_rgba(0,0,0,0.5)]"
      >
        <div className="flex h-5 items-center justify-end">
          <button type="button" aria-label="Close" className="-mr-0.5 text-[#ccc7b4]">
            <Glyph name="times" className="h-[22px] w-[22px]" />
          </button>
        </div>
        <h2 id="invoice-title" className="mb-3 font-['Liberation_Sans',sans-serif] text-3xl leading-[31px] font-bold text-[#333333]">Fatura porosise</h2>
        <PdfViewer />
      </div>
    </div>
  );
}

/* ---------- Desktop ---------- */

export default function App() {
  return (
    <div className="flex h-screen flex-col overflow-hidden font-['Ubuntu','Noto_Sans',sans-serif]">
      <SystemBar />
      <div className="flex min-h-0 flex-1">
        <Launcher />
        <div className="flex min-w-0 flex-1 flex-col">
          <TabStrip />
          <NavBar />
          <main className="relative min-h-0 flex-1 overflow-hidden bg-white">
            <OrdersPage />
            <InvoiceModal />
          </main>
        </div>
      </div>
    </div>
  );
}
